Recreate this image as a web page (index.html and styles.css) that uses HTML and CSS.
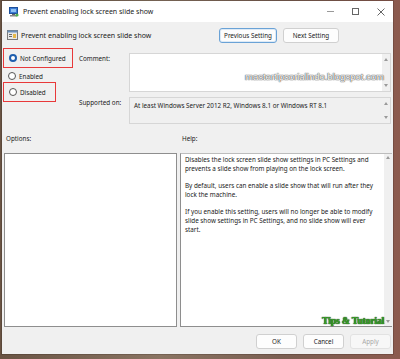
FILE: index.html
```html
<!DOCTYPE html>
<html lang="en">
<head>
    <meta charset="UTF-8">
    <title>Prevent enabling lock screen slide show</title>
    <link rel="stylesheet" href="styles.css">
</head>
<body>

<div class="window">

    <!-- Title bar -->
    <div class="titlebar">
        <svg class="app-icon" width="10" height="10" viewBox="0 0 10 10">
            <rect x="0.5" y="0.5" width="8" height="6" fill="#3b7bd4" stroke="#1d4f9a" stroke-width="1"/>
            <rect x="2" y="2" width="5" height="3" fill="#8fc1f2"/>
            <rect x="3" y="7" width="3" height="1" fill="#666"/>
            <rect x="1" y="8" width="7" height="1.5" fill="#888"/>
            <circle cx="8" cy="8" r="1.6" fill="#4caf50"/>
        </svg>
        <span class="title">Prevent enabling lock screen slide show</span>
        <div class="controls">
            <span class="ctl min"></span>
            <span class="ctl max"></span>
            <span class="ctl close">
                <svg width="8" height="8" viewBox="0 0 8 8"><path d="M0.5 0.5L7.5 7.5M7.5 0.5L0.5 7.5" stroke="#555" stroke-width="0.9"/></svg>
            </span>
        </div>
    </div>

    <div class="content">

        <!-- Setting header -->
        <div class="head">
            <svg class="setting-icon" width="11" height="10" viewBox="0 0 11 10">
                <rect x="0.5" y="0.5" width="10" height="9" fill="#e8e8e8" stroke="#7a7a7a" stroke-width="1"/>
                <rect x="0.5" y="0.5" width="10" height="2" fill="#6b8fb8"/>
                <rect x="2" y="4" width="3" height="1" fill="#6a6a6a"/>
                <rect x="2" y="6" width="3" height="1" fill="#6a6a6a"/>
                <rect x="6" y="4" width="3" height="4" fill="#e6b94a"/>
            </svg>
            <span class="head-title">Prevent enabling lock screen slide show</span>
            <div class="nav">
                <button class="btn focused">Previous Setting</button>
                <button class="btn">Next Setting</button>
            </div>
        </div>

        <!-- State + comment -->
        <div class="settings">
            <div class="states">
                <label class="radio marked first"><span class="dot checked"></span>Not Configured</label>
                <label class="radio"><span class="dot"></span>Enabled</label>
                <label class="radio marked last"><span class="dot"></span>Disabled</label>
            </div>
            <div class="fields">
                <div class="field comment-row">
                    <span class="field-label">Comment:</span>
                    <div class="box comment">
                        <div class="box-text"></div>
                        <div class="scroll"><span class="arr up"></span><span class="arr down"></span></div>
                        <span class="mark-site">mastertipsorialindo.blogspot.com</span>
                    </div>
                </div>
                <div class="field supported-row">
                    <span class="field-label">Supported on:</span>
                    <div class="box supported">
                        <div class="box-text">At least Windows Server 2012 R2, Windows 8.1 or Windows RT 8.1</div>
                        <div class="scroll"><span class="arr up"></span><span class="arr down"></span></div>
                    </div>
                </div>
            </div>
        </div>

        <!-- Options / Help -->
        <div class="pane-labels">
            <span class="opt-label">Options:</span>
            <span class="help-label">Help:</span>
        </div>
        <div class="panes">
            <div class="pane options"></div>
            <div class="pane help">
                <div class="help-text">
                    <p>Disables the lock screen slide show settings in PC Settings and prevents a slide show from playing on the lock screen.</p>
                    <p>By default, users can enable a slide show that will run after they lock the machine.</p>
                    <p>If you enable this setting, users will no longer be able to modify slide show settings in PC Settings, and no slide show will ever start.</p>
                </div>
                <div class="scroll"><span class="arr up"></span><span class="arr down"></span></div>
                <span class="mark-tips">Tips &amp; Tutorial</span>
            </div>
        </div>

        <!-- Dialog buttons -->
        <div class="footer">
            <button class="btn wide">OK</button>
            <button class="btn wide">Cancel</button>
            <button class="btn wide disabled">Apply</button>
        </div>
    </div>
</div>

</body>
</html>
```

FILE: styles.css
```css
body {
    margin: 0;
    padding: 1px 7px 5px 2px;
    background: linear-gradient(90deg, #6a5444, #8a7462 40%, #7b5f52 70%, #8c5a4e);
    font-family: "Noto Sans", "Open Sans", sans-serif;
    font-size: 6.3px;
    color: #1a1a1a;
}

/* Window frame */
.window {
    width: 391px;
    height: 353px;
    background-color: #f0f0f0;
    display: flex;
    flex-direction: column;
    box-shadow: 0 0 0 1px rgba(0,0,0,0.15);
}

.titlebar {
    height: 21px;
    background-color: #ffffff;
    display: flex;
    align-items: center;
    padding-left: 7px;
}

.app-icon {
    margin-right: 4px;
}

.title {
    font-size: 7px;
}

.controls {
    margin-left: auto;
    display: flex;
    align-items: center;
    height: 100%;
}

.ctl {
    width: 25px;
    height: 100%;
    display: flex;
    align-items: center;
    justify-content: center;
}

.ctl.min::before {
    content: "";
    width: 7px;
    height: 1px;
    background: #999;
}

.ctl.max::before {
    content: "";
    width: 5px;
    height: 5px;
    border: 1px solid #666;
}

.content {
    flex: 1;
    display: flex;
    flex-direction: column;
}

/* Header row */
.head {
    height: 26px;
    display: flex;
    align-items: center;
    padding-left: 5px;
}

.setting-icon {
    margin-right: 3px;
}

.head-title {
    font-size: 7px;
}

.nav {
    margin-left: auto;
    margin-right: 54px;
    display: flex;
    gap: 6px;
    padding-top: 1px;
}

.btn {
    height: 15px;
    padding: 0;
    white-space: nowrap;
    font-family: "Noto Sans", "Open Sans", sans-serif;
    font-size: 6.3px;
    color: #1a1a1a;
    background-color: #fdfdfd;
    border: 1px solid #d0d0d0;
    border-radius: 3px;
}

.btn.focused {
    border-color: #6aa2d6;
    box-shadow: inset 0 0 0 1px #ddeaf6;
}

.nav .btn:first-child { width: 58px; }
.nav .btn:last-child { width: 56px; }

.btn.wide {
    width: 41px;
}

.btn.disabled {
    color: #a8a8a8;
    background-color: #f7f7f7;
    border-color: #e2e2e2;
}

/* Radios + comment */
.settings {
    height: 76px;
    display: flex;
}

.states {
    width: 75px;
    padding-left: 1px;
    display: flex;
    flex-direction: column;
}

.radio {
    display: flex;
    align-items: center;
    height: 16px;
    padding-left: 5px;
    white-space: nowrap;
}

.radio.marked {
    border: 1px solid #e8393a;
    height: 18px;
}

.radio.first {
    width: 63px;
}

.radio.last {
    width: 46px;
    margin-top: -2px;
}

.dot {
    width: 6px;
    height: 6px;
    border: 1px solid #555;
    border-radius: 50%;
    margin-right: 3px;
    background-color: #fff;
}

.dot.checked {
    border: 2px solid #1f5fae;
    width: 4px;
    height: 4px;
}

.fields {
    flex: 1;
    display: flex;
    flex-direction: column;
    padding-top: 5px;
    padding-right: 2px;
}

.field {
    display: flex;
}

.field-label {
    width: 50px;
    padding-left: 1px;
    padding-top: 1px;
}

.supported-row { margin-top: 5px; }

.box {
    flex: 1;
    display: flex;
    position: relative;
    border: 1px solid #d6d6d6;
}

.comment {
    height: 37px;
    background-color: #ffffff;
}

.supported {
    height: 25px;
    background-color: #f0f0f0;
}

.box-text {
    flex: 1;
    padding: 3px 4px;
}

.scroll {
    width: 8px;
    display: flex;
    flex-direction: column;
    justify-content: space-between;
    align-items: center;
    padding: 4px 0;
    background-color: #f0f0f0;
}

.arr {
    width: 0;
    height: 0;
    border-left: 2px solid transparent;
    border-right: 2px solid transparent;
}

.arr.up { border-bottom: 3px solid #9a9a9a; }
.arr.down { border-top: 3px solid #9a9a9a; }

/* Options / Help */
.pane-labels {
    height: 28px;
    display: flex;
    align-items: center;
    padding-bottom: 1px;
}

.opt-label {
    width: 176px;
    padding-left: 4px;
}

.panes {
    height: 174px;
    display: flex;
    gap: 3px;
    padding-left: 2px;
    padding-right: 1px;
}

.pane {
    background-color: #ffffff;
    border: 1px solid #8e8e8e;
}

.options {
    width: 171px;
}

.help {
    flex: 1;
    display: flex;
    position: relative;
    border-right: none;
    border-top-color: #bdbdbd;
}

.help-text {
    flex: 1;
    padding: 1px 4px;
    line-height: 9px;
}

.help-text p {
    margin: 0 0 8px;
}

.help .scroll {
    padding: 2px 0 3px;
}

/* Footer */
.footer {
    flex: 1;
    display: flex;
    justify-content: flex-end;
    align-items: center;
    gap: 6px;
    padding-right: 2px;
    padding-top: 1px;
}

/* Watermarks laid over the dialog */
.mark-site {
    position: absolute;
    left: 115px;
    top: 17px;
    font-family: "Liberation Sans", sans-serif;
    font-size: 9.5px;
    color: #ffffff;
    text-shadow: 0 0 1px #555, 0 0 1px #555, 0 0 1px #555;
}

.mark-tips {
    position: absolute;
    right: 8px;
    bottom: 0;
    font-family: "Liberation Serif", serif;
    font-weight: bold;
    font-size: 10px;
    letter-spacing: -0.3px;
    color: #3aa02a;
    text-shadow: 0 0 1px #0e3a08, 0 0 1px #0e3a08;
}
```
